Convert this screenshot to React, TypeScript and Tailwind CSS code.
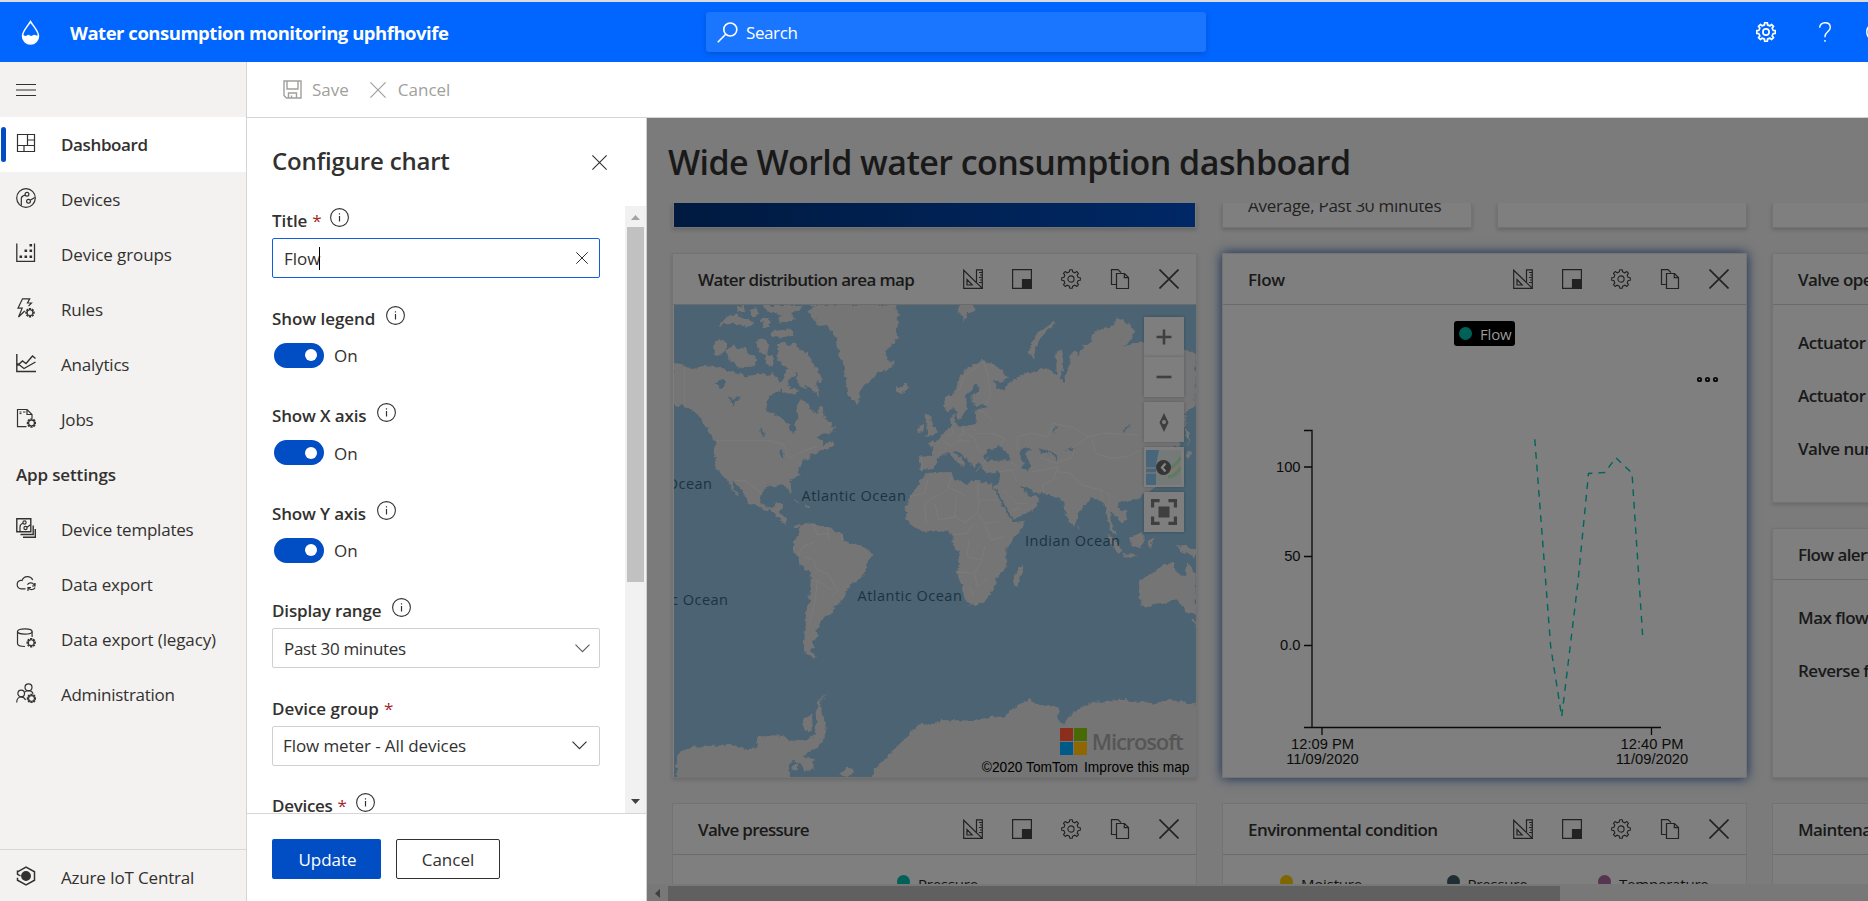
import type { ReactNode } from "react";

type SvgProps = { className?: string; children?: ReactNode; size?: number; sw?: number; box?: number };

function Svg({ className = "", children, size = 20, sw = 1.2, box = 20 }: SvgProps) {
  return (
    <svg className={`shrink-0 ${className}`} width={size} height={size} viewBox={`0 0 ${box} ${box}`} fill="none" stroke="currentColor" strokeWidth={sw}>
      {children}
    </svg>
  );
}

function gearPath(cx: number, cy: number, outer: number, inner: number, teeth = 8) {
  const pts: string[] = [];
  const step = (Math.PI * 2) / teeth;
  for (let i = 0; i < teeth; i++) {
    const a = i * step - Math.PI / 2;
    const at = (r: number, o: number) => `${(cx + r * Math.cos(a + o * step)).toFixed(2)},${(cy + r * Math.sin(a + o * step)).toFixed(2)}`;
    pts.push(at(inner, -0.27), at(outer, -0.18), at(outer, 0.18), at(inner, 0.27));
  }
  return `M${pts.join("L")}Z`;
}

const SmallGear = ({ x, y }: { x: number; y: number }) => (
  <path d={gearPath(x, y, 4.2, 2.8)} strokeWidth={1.1} />
);

const GearIcon = ({ className = "", sw = 1.2 }: { className?: string; sw?: number }) => (
  <Svg className={className} sw={sw}>
    <path d={gearPath(10, 10, 9.4, 7.3)} strokeLinejoin="round" />
    <circle cx="10" cy="10" r="3.1" />
  </Svg>
);

const Cross = ({ size, sw = 1.2, className = "" }: { size: number; sw?: number; className?: string }) => (
  <Svg size={size} sw={(sw * 20) / size} className={className}>
    <path d="M.5.5l19 19M19.5.5l-19 19" />
  </Svg>
);

const Chevron = ({ className = "" }: { className?: string }) => (
  <svg className={className} width="15" height="9" viewBox="0 0 15 9" fill="none" stroke="currentColor" strokeWidth="1.15">
    <path d="M.5.7l7 7 7-7" />
  </svg>
);

const icons: Record<string, ReactNode> = {
  dashboard: <Svg><path d="M1.5 1.5h17v17h-17zM11.5 1.5v11M1.5 12.5h17M11.5 7h7M8 12.5v6" /></Svg>,
  devices: (
    <Svg>
      <circle cx="10" cy="10" r="9.3" />
      <circle cx="11" cy="6.3" r="1.9" />
      <circle cx="12.5" cy="13.2" r="1.9" />
      <path d="M9.2 7.2C6 8 5 9.5 5.3 11.5v6M14.2 12.3l4.6-2.8" />
    </Svg>
  ),
  groups: (
    <Svg sw={1.3}>
      <path d="M.8.5v17.8h17.7V.5" />
      <g fill="currentColor" stroke="none">
        <path d="M13.5 1h2.6v2.6h-2.6zM13.5 6.5h2.6v2.6h-2.6zM13.5 12.5h2.6v2.6h-2.6zM8.5 6.5h2.6v2.6H8.5zM8.5 12.5h2.6v2.6H8.5zM3.5 12.5h2.6v2.6H3.5z" />
      </g>
    </Svg>
  ),
  rules: (
    <Svg sw={1.2}>
      <path d="M12.5 8.2L15.5 5h-4l2.2-4.2H6.5L2 10.2h4.2L2.5 19l6.2-6" />
      <SmallGear x={14} y={14.7} />
    </Svg>
  ),
  analytics: <Svg sw={1.4}><path d="M.8 1v17.5H20M1.5 12.5L6.5 8l3.5 2.5 6.5-7.5L19.5 5.5M1.5 10.5l6.5 5 11.5-6.5" /></Svg>,
  jobs: (
    <Svg>
      <path d="M10.5 18.7h-9V1.5h9.5l5 5v3.5M11 1.5v5h5" />
      <path d="M3.5 4h2M7 4h2.5M3.5 5.6h2" strokeWidth={1} />
      <SmallGear x={15.5} y={15} />
    </Svg>
  ),
  templates: (
    <Svg>
      <path d="M.8.8h14v13H.8zM17.2 7.5v9H4.5M19.3 11v8.2H7" strokeWidth={1.4} />
      <circle cx="8.5" cy="4.5" r="1.6" />
      <circle cx="9.5" cy="10" r="1.6" />
      <path d="M6.8 5.2C4.5 6 4 7.5 4 9v4.5M11 9.3l3.5-2.5" />
    </Svg>
  ),
  cloud: (
    <Svg>
      <path d="M9.5 15.8H5.2a4.3 4.3 0 0 1-.6-8.5c1 0 1.4.2 1.4.2A5.8 5.8 0 0 1 16.7 7M11.5 11.8c.8-2 4.5-3 6.5-.2l1-1.3M19 10v3h-3M19 14.5c-1 2.3-4.5 3-6.5.3M12 18v-3.5h3" />
    </Svg>
  ),
  database: (
    <Svg>
      <ellipse cx="8.8" cy="3.5" rx="7.3" ry="2.6" />
      <path d="M1.5 3.5v12c0 1.8 3 3 7.5 3M16.1 3.5V9" />
      <SmallGear x={15.2} y={14.7} />
    </Svg>
  ),
  admin: (
    <Svg>
      <circle cx="12.5" cy="4.3" r="3.5" />
      <circle cx="5.2" cy="10.5" r="3.3" />
      <path d="M.7 19.5c0-3.5 2-5.7 4.5-5.7s3.6 1.5 4.4 3.2M8.7 9.2c1-1 2-1.5 3.8-1.5 2.3 0 4 1.3 4.6 3.2" />
      <SmallGear x={15.5} y={15.5} />
    </Svg>
  ),
  central: (
    <Svg sw={1.5}>
      <path d="M1.5 4.5v3.8l3 1.5M1.5 5.8L10 1.2l8.5 4.6v8.4L10 18.8l-8.5-4.6v-2.5" />
      <circle cx="10" cy="10" r="4.2" fill="currentColor" />
    </Svg>
  ),
};

function NavItem({ icon, label, active = false, track = "tracking-[-0.2px]" }: { icon: string; label: string; active?: boolean; track?: string }) {
  return (
    <div className={`relative flex h-[55px] items-center pl-4 ${active ? "bg-white" : ""}`}>
      {active && <span className="absolute left-px top-[10px] h-[35px] w-[5px] rounded-sm bg-[#004dc4]" />}
      <span className="mb-1 flex w-5 text-[#323130]">{icons[icon]}</span>
      <span className={`ml-[25px] whitespace-nowrap pt-px ${track} ${active ? "font-[550]" : ""}`}>{label}</span>
    </div>
  );
}

const Info = ({ className = "ml-[11px]" }: { className?: string }) => (
  <Svg size={19} box={19} sw={1.1} className={`mb-[11px] ${className}`}>
    <circle cx="9.5" cy="9.5" r="8.9" />
    <path d="M9.5 8v5.5M9.5 5.2v1.3" strokeWidth={1.2} />
  </Svg>
);

type FieldProps = { label: string; required?: boolean; info?: boolean; track?: string; infoGap?: string; children?: ReactNode };

function Field({ label, required = false, info = true, track = "tracking-[-0.05px]", infoGap, children }: FieldProps) {
  return (
    <div className="h-[97.5px]">
      <div className="flex h-8 items-end">
        <span className={`whitespace-nowrap pb-[6px] font-[570] leading-[23px] ${track}`}>{label}</span>
        {required && <span className="pb-[6px] pl-[5px] leading-[23px] text-[#a4262c]">*</span>}
        {info && <Info className={infoGap} />}
      </div>
      {children}
    </div>
  );
}

const Toggle = () => (
  <div className="flex items-center pl-[2px] pt-[7px]">
    <span className="flex h-[25px] w-[50px] items-center justify-end rounded-full bg-[#004dc4] pr-[7px]">
      <span className="size-3 rounded-full bg-white" />
    </span>
    <span className="pl-[10px] pt-px leading-[23px]">On</span>
  </div>
);

const CardIcons = () => (
  <div className="flex gap-[28.8px] text-[#222]">
    <Svg sw={1.2}>
      <path d="M.7 1.2v18.1h18.6zM4 10.5v5.5h5.2zM13.5 13V.9h5.8v18.4M16 3.5h3.3M17 6h2.3M16 8.5h3.3M17 11h2.3M16 13.5h3.3" />
    </Svg>
    <Svg><path d="M.6.6h18.8v18.8H.6z" /><path d="M10.5 10.5h9v9h-9z" fill="currentColor" /></Svg>
    <GearIcon sw={1.1} />
    <Svg><path d="M6.5 15.5H1.5V.6H8l3 3M6.5 4.5h8l4 4v11h-12zM14.3 4.5v4.2h4.2" /></Svg>
    <Cross size={20} sw={1.6} />
  </div>
);

function Card({ title, icons: showIcons = true, className = "", track = "tracking-[-0.6px]", children }: { title: string; icons?: boolean; className?: string; track?: string; children?: ReactNode }) {
  return (
    <section className={`flex w-[525px] shrink-0 flex-col overflow-hidden border border-[#737373] bg-[#7f7f7f] ${className}`}>
      <header className="flex h-[51px] shrink-0 items-center justify-between border-b border-[#6b6b6b] pl-[25px] pr-[17.5px]">
        <h2 className={`whitespace-nowrap pt-px font-[550] text-[#191919] ${track}`}>{title}</h2>
        {showIcons && <CardIcons />}
      </header>
      {children}
    </section>
  );
}

const LAND = [
  "39,222 55,224 75,228 95,240 110,232 125,224 140,230 152,226 160,235 180,232 195,245 215,248 230,252 240,265 250,250 265,255 285,252 300,258 318,248 330,262 335,278 345,270 355,240 372,232 380,258 368,262 352,285 345,298 325,305 308,318 300,335 298,360 310,370 325,375 340,385 352,395 360,400 362,420 375,433 380,410 378,398 388,385 384,362 383,345 392,328 402,332 415,340 425,362 438,370 448,352 456,358 458,378 470,392 490,412 488,425 470,430 450,432 437,440 445,450 455,455 460,465 480,455 490,462 470,475 450,483 435,490 420,492 415,508 402,515 392,530 390,550 375,568 363,575 368,595 368,615 362,605 355,588 340,583 320,590 300,590 288,600 283,625 288,645 300,655 318,655 325,640 345,638 340,655 335,668 352,685 356,705 370,712 385,705 392,708 385,718 372,715 358,705 340,692 320,668 300,660 275,652 250,640 245,625 235,608 215,585 200,570 205,590 222,618 212,612 198,590 188,568 175,558 160,535 153,515 154,480 155,460 148,445 135,420 120,395 105,375 90,360 70,348 39,342",
  "392,708 405,695 420,700 440,702 470,712 488,722 510,730 518,752 530,758 555,768 580,775 595,795 585,810 577,825 575,845 562,868 545,875 530,885 525,900 512,925 500,945 487,948 485,960 483,972 465,978 458,988 445,995 448,1012 435,1022 440,1042 428,1055 428,1070 420,1082 440,1105 425,1102 408,1090 403,1060 408,1010 408,970 418,930 422,870 422,850 395,825 385,800 370,778 375,755 385,738",
  "415,45 430,52 410,62 430,85 445,108 465,105 480,125 492,145 495,170 500,195 512,215 515,240 520,270 525,300 532,325 545,338 552,345 560,315 568,290 585,278 600,262 610,248 630,242 645,230 658,215 640,212 630,200 635,180 655,160 665,140 660,120 672,105 662,80 674,75 662,65 665,45",
  "660,288 675,292 690,278 698,290 690,305 675,312 665,302",
  "835,45 875,45 885,60 870,70 860,65 852,95 845,75 835,60",
  "155,150 175,148 190,160 182,185 165,200 150,190",
  "185,180 205,165 220,178 240,170 245,190 262,200 275,212 262,232 235,235 215,228 195,212",
  "328,165 345,155 360,165 380,160 400,185 415,190 425,220 440,235 455,270 440,275 445,318 425,300 405,280 392,275 380,250 370,240 350,230 330,210",
  "290,45 385,45 402,50 370,70 375,90 350,98 330,92 338,75 310,70 295,60",
  "313,122 370,120 370,138 330,143 313,135",
  "165,105 185,80 215,72 235,88 260,95 245,112 225,105 200,98",
  "215,52 235,48 238,62 220,68", "250,60 272,55 275,75 258,80", "285,85 305,80 308,110 290,115",
  "268,155 290,145 305,165 300,195 282,190", "300,195 320,200 312,232 296,220",
  "338,292 355,285 372,300 388,298 380,312 350,310", "380,262 400,265 412,300 395,290",
  "725,500 745,496 765,498 764,475 750,460 765,455 780,450 790,435 800,422 815,410 812,380 825,378 828,405 845,408 870,405 885,395 888,375 880,362 900,355 918,350 910,345 885,348 875,340 875,315 895,295 885,280 872,300 855,315 855,335 860,352 850,370 842,390 832,388 828,362 820,355 805,368 795,350 798,325 815,315 830,295 838,265 855,240 880,222 905,210 935,225 960,240 975,265 960,278 935,270 945,300 965,298 975,282 1000,262 1030,252 1060,240 1085,232 1100,245 1110,255 1110,220 1110,190 1125,175 1130,200 1128,240 1118,270 1130,275 1140,240 1150,215 1145,195 1165,185 1170,200 1185,170 1205,155 1215,128 1245,115 1270,105 1275,85 1295,90 1320,105 1330,130 1310,160 1300,170 1340,155 1355,155 1500,190 1500,355 1480,358 1470,370 1475,400 1465,420 1460,450 1455,470 1440,470 1425,500 1440,540 1400,580 1370,605 1340,625 1310,635 1285,640 1280,652 1305,665 1310,685 1295,700 1275,675 1260,668 1262,700 1280,735 1270,735 1255,700 1250,665 1240,640 1220,628 1205,625 1195,640 1170,670 1165,700 1157,710 1145,695 1135,665 1132,635 1120,630 1110,618 1085,612 1055,610 1035,608 1030,598 1010,585 1018,600 1040,618 1050,615 1065,632 1050,655 1010,678 988,690 980,670 960,635 945,605 932,585 945,580 950,560 945,545 920,548 905,542 893,520 880,532 868,520 855,505 838,490 825,482 835,500 855,515 845,530 825,510 810,490 795,495 780,505 775,520 765,535 745,542 730,538",
  "750,548 780,548 815,545 820,562 845,575 865,585 870,570 900,575 930,583 940,605 955,640 970,670 985,697 1022,692 1015,715 990,745 970,775 970,790 972,825 960,845 940,865 943,880 930,900 920,925 900,940 868,947 860,935 848,905 845,880 830,845 838,815 835,790 820,760 818,735 805,722 770,722 730,725 705,705 690,685 688,660 700,620 715,595 730,570",
  "1015,820 1017,835 1000,890 990,888 988,865 990,850 1005,840",
  "745,370 755,375 760,400 775,425 770,435 745,440 750,420 745,400 740,385", "725,405 740,398 738,425 722,430",
  "1105,95 1110,105 1085,120 1065,145 1052,175 1045,205 1032,190 1040,160 1060,125",
  "1248,730 1270,745 1295,785 1285,790 1262,760", "1295,788 1340,797 1325,803 1300,797", "1315,745 1350,725 1358,745 1345,775 1318,765",
  "1365,750 1385,748 1375,762 1380,775 1368,772", "1445,770 1470,768 1500,780 1500,800 1470,790",
  "1338,875 1360,862 1385,845 1400,830 1415,822 1440,820 1442,840 1460,860 1470,855 1475,820 1485,830 1500,858 1500,975 1475,970 1460,945 1450,930 1420,935 1400,940 1370,950 1348,950 1340,900",
  "1490,990 1500,995 1500,1012", "1168,706 1176,716 1168,720", "1472,415 1482,425 1480,470 1474,440", "1476,480 1488,495 1476,503", "368,628 395,640 385,640", "405,646 422,648 412,656",
  "45,1470 45,1395 70,1380 90,1370 140,1368 200,1365 240,1378 270,1375 272,1345 300,1335 345,1338 370,1355 400,1350 425,1345 435,1320 440,1290 438,1250 445,1235 478,1197 455,1228 447,1250 462,1290 465,1330 462,1345 440,1370 420,1385 400,1400 430,1408 430,1435 405,1445 395,1420 375,1410 360,1420 365,1470",
  "590,1470 600,1440 650,1385 690,1340 720,1305 780,1295 790,1290 870,1292 930,1280 965,1280 980,1258 1010,1240 1035,1225 1060,1245 1118,1252 1112,1285 1128,1305 1145,1280 1180,1250 1210,1240 1280,1228 1380,1240 1430,1230 1510,1245 1510,1470",
  "370,1425 390,1420 388,1440 372,1442", "500,1455 528,1432 545,1448 530,1462", "400,1290 425,1270 428,1320 410,1325",
];

const LAKES = [
  "905,500 915,480 935,475 955,472 975,490 978,510 940,512 912,512", "1003,480 1030,470 1037,478 1025,495 1040,530 1030,543 1015,535 1015,510",
  "150,280 170,268 188,280 172,294", "190,322 208,328 230,318 215,335 205,347", "278,412 285,418 293,440 287,440", "338,480 348,478 344,505 338,500",
  "1318,398 1312,415 1290,434 1302,415", "1060,475 1080,480 1108,495 1112,515 1095,490 1065,488", "1138,478 1165,473 1150,482", "1008,585 1020,590 1038,598 1050,612 1036,618 1018,604", "1100,420 1118,402 1105,425 1110,438",
];

const BORDERS =
  "M68 228V345M158 451H300L345 462 360 505 410 480 440 468M198 570L240 573 270 600 285 610M815 410L822 430 800 440M845 408L852 430 835 440 850 455M790 450L815 470 830 455 870 452M870 405L890 430 930 430 965 445 950 470M888 360L905 365 935 395M860 430L880 445 890 475 905 490M905 215L918 250 925 320 910 345M838 300L850 260 895 225M1000 480V440L1040 430 1085 440 1100 400 1155 412 1200 440 1160 470 1155 500 1110 520 1060 500M1200 440L1240 430 1340 435M1210 450L1220 490 1260 505 1310 500 1345 480M975 510L1000 530 985 545M950 545L985 540 1000 575M1040 545L1075 540 1115 530 1100 570 1070 585 1075 612M1115 545L1150 550 1180 585 1235 600 1240 630M1235 600L1260 615 1255 660M730 500L735 540M815 560L805 600 740 640M815 595L860 620M890 580V630H950M895 630L888 670 850 700M750 570L740 610 700 620M740 640L745 700M770 640L780 690 830 680M830 620L825 680 860 700M890 670L910 700 950 695M910 700L925 750 965 740M820 735L860 730 880 700M865 750L860 800 900 810 910 770M832 845L880 850 900 815M880 850L890 890 920 865M865 890L880 920M430 700L440 735 470 730 475 750M470 712V740M510 730V750M405 800L430 810 440 840 470 850 485 880 500 900 480 920M422 870L440 875 435 930 420 1000M385 800L400 770 435 755M440 870L480 900M960 600L1000 640 1030 640M985 660L1010 655M885 545L920 500";

function WorldMap() {
  return (
    <svg width="522" height="472" viewBox="0 0 522 472" className="block bg-[#4b6372]">
      <defs>
        <filter id="coast" x="-5%" y="-5%" width="110%" height="110%">
          <feTurbulence type="fractalNoise" baseFrequency="0.18" numOctaves="2" seed="4" />
          <feDisplacementMap in="SourceGraphic" scale="6" xChannelSelector="R" yChannelSelector="G" />
        </filter>
      </defs>
      <g filter="url(#coast)">
        <g transform="matrix(.35714 0 0 .33333 -14 -15)">
          {LAND.map((p) => <polygon key={p} points={p} fill="#757575" />)}
          {LAKES.map((p) => <polygon key={p} points={p} fill="#4b6372" />)}
        </g>
      </g>
      <path d={BORDERS} transform="matrix(.35714 0 0 .33333 -14 -15)" fill="none" stroke="#7d7d7d" strokeWidth="2.2" />
      <g className="fill-[#1b3342] font-['Open_Sans',sans-serif] text-[14.5px] font-[450] tracking-[0.5px]">
        <text x="38.5" y="183.5" textAnchor="end">Pacific Ocean</text>
        <text x="54.5" y="299.5" textAnchor="end">Pacific Ocean</text>
        <text x="127.5" y="195.5">Atlantic Ocean</text>
        <text x="183.5" y="296">Atlantic Ocean</text>
        <text x="351" y="241">Indian Ocean</text>
      </g>
    </svg>
  );
}

const mapButton = "flex h-10 w-10 items-center justify-center bg-[#7e7e7e] text-[#3f3f3f] shadow-[0_0_3px_rgba(0,0,0,0.25)]";

function MapBody() {
  return (
    <div className="relative h-[472px] w-[522px] self-center">
      <WorldMap />
      <div className="absolute left-[470px] top-3 flex flex-col gap-[5px]">
        <div>
          <div className={mapButton}><Svg size={16} box={16} sw={2.6}><path d="M8 .5v15M.5 8h15" /></Svg></div>
          <div className={mapButton}><Svg size={16} box={16} sw={2.6}><path d="M.5 8h15" /></Svg></div>
        </div>
        <div className={mapButton}>
          <svg width="10" height="19" viewBox="0 0 10 19" fill="currentColor" fillRule="evenodd"><path d="M5 0l4.5 9.5L5 19 .5 9.5zM5 7a2 2 0 1 0 0 4.2A2 2 0 0 0 5 7z" /></svg>
        </div>
        <div className={mapButton}>
          <svg width="35" height="35" viewBox="0 0 35 35">
            <path fill="#757a78" d="M0 0h35v35H0z" />
            <path fill="#48667b" d="M0 0h13l-3 15v20H0z" />
            <path fill="none" stroke="#777" strokeWidth="1.5" d="M0 18h12M0 23h10" />
            <path fill="none" stroke="#5c7c62" strokeWidth="3" d="M22 27c6 0 10-4 13-10M24 18c5-2 8-6 11-11" />
            <path fill="none" stroke="#837767" strokeWidth="2" d="M22 23c6-1 10-5 13-10" />
            <circle cx="17.5" cy="17.5" r="7.5" fill="#353535" />
            <path d="M19.5 13.5l-3.5 4 3.5 4" fill="none" stroke="#868686" strokeWidth="2.2" />
          </svg>
        </div>
        <div className={mapButton}>
          <Svg size={26} box={26} sw={3.2}><path d="M1.6 8.5V1.6h7M17.4 1.6h7v6.9M24.4 17.5v6.9h-7M8.6 24.4h-7v-6.9" /><path d="M7.5 7.5h11v11h-11z" fill="currentColor" stroke="none" /></Svg>
        </div>
      </div>
      <div className="absolute bottom-0 right-[6px] flex flex-col items-end">
        <div className="flex items-center gap-[5px] pr-[7px]">
          <div className="grid grid-cols-2 gap-px">
            <i className="size-[13px] bg-[#8b2f1c]" /><i className="size-[13px] bg-[#476a05]" />
            <i className="size-[13px] bg-[#005a88]" /><i className="size-[13px] bg-[#8e6703]" />
          </div>
          <span className="text-[22px] font-semibold leading-[27px] tracking-[-1.15px] text-[#565656]">Microsoft</span>
        </div>
        <div className="flex gap-[6px] pt-[4px] font-['Liberation_Sans',sans-serif] text-[13.75px] leading-[18px] text-black">
          <span>©2020 TomTom</span><span>Improve this map</span>
        </div>
      </div>
    </div>
  );
}

function FlowChart() {
  return (
    <div className="relative h-[472px]">
      <div className="flex justify-center pt-4">
        <span className="flex h-[25px] w-[61px] items-center gap-2 rounded-[3px] bg-black pl-[5px] text-[15px] tracking-[-0.2px] text-[#999]">
          <i className="size-[13px] rounded-full bg-[#006158]" />
          <span className="pt-[2px]">Flow</span>
        </span>
      </div>
      <svg className="absolute left-0 top-0" width="522" height="472" viewBox="1223 305 522 472" fill="none" stroke="#0a0a0a">
        <g strokeWidth="1.8"><circle cx="1699.5" cy="379.5" r="1.7" /><circle cx="1707.5" cy="379.5" r="1.7" /><circle cx="1715.5" cy="379.5" r="1.7" /></g>
        <path strokeWidth="1.3" d="M1304 430.5h8v297M1304 467h8M1304 556.5h8M1304 645.5h8M1304 727.5h357M1322 727.5v7.5M1651.5 727.5v7.5" />
        <polyline points="1534.8,439.3 1550.7,646.7 1561.7,716.7 1578,581.7 1588.5,473.5 1604.9,472.5 1615.8,457.7 1632,473 1642.6,635" stroke="#00655c" strokeWidth="1.4" strokeDasharray="6.8 5.9" />
        <g fill="#0c0c0c" stroke="none" className="font-['Liberation_Sans',sans-serif] text-[14.7px]">
          <text x="1300.5" y="472" textAnchor="end">100</text>
          <text x="1300.5" y="561" textAnchor="end">50</text>
          <text x="1300.5" y="650" textAnchor="end">0.0</text>
          <text x="1322.5" y="749" textAnchor="middle">12:09 PM</text>
          <text x="1322.5" y="764" textAnchor="middle">11/09/2020</text>
          <text x="1652" y="749" textAnchor="middle">12:40 PM</text>
          <text x="1652" y="764" textAnchor="middle">11/09/2020</text>
        </g>
      </svg>
    </div>
  );
}

function Legend({ color, label, className = "" }: { color: string; label: string; className?: string }) {
  return (
    <span className={`flex items-start gap-2 text-[15px] leading-5 tracking-[-0.2px] text-[#111] ${className}`}>
      <i className={`size-[13px] rounded-full ${color}`} />
      <span className="-mt-px">{label}</span>
    </span>
  );
}

const small = "h-[25px] shrink-0 border border-t-0 border-[#737373] shadow-[0_2px_4px_rgba(0,0,0,0.18)]";
const lift = "shadow-[0_2px_4px_rgba(0,0,0,0.15)]";
const row = "pl-[25px] font-[550] leading-[23px] tracking-[-0.5px] text-[#191919]";

function Dashboard() {
  return (
    <main className="flex min-w-0 flex-1 flex-col bg-[#7b7b7b]">
      <h1 className="h-[85px] shrink-0 whitespace-nowrap pl-[21px] pt-[21px] text-[34px] font-[580] leading-[46px] tracking-[-0.56px] text-[#191919]">
        Wide World water consumption dashboard
      </h1>
      <div className="flex h-[681px] flex-col gap-[25px] overflow-hidden pl-[25px]">
        <div className="flex gap-[25px]">
          <div className={`${small} w-[525px] px-px`}>
            <div className="h-full bg-gradient-to-r from-[#001a40] to-[#002866]" />
          </div>
          <div className={`${small} w-[250px] overflow-hidden bg-[#7f7f7f] pl-[25px]`}>
            <div className="-mt-[9px] whitespace-nowrap leading-[24px] tracking-[-0.26px] text-[#222]">Average, Past 30 minutes</div>
          </div>
          <div className={`${small} w-[250px] bg-[#7f7f7f]`} />
          <div className={`${small} w-[250px] bg-[#7f7f7f]`} />
        </div>
        <div className="flex gap-[25px]">
          <Card title="Water distribution area map" track="tracking-[-0.62px]" className={`h-[525px] ${lift}`}><MapBody /></Card>
          <Card title="Flow" track="tracking-[-0.3px]" className="h-[525px] shadow-[0_0_11px_rgba(8,36,82,0.9)]"><FlowChart /></Card>
          <div className="flex shrink-0 flex-col gap-[25px]">
            <Card title="Valve operation" icons={false} className={`h-[250px] ${lift}`}>
              <div className={`${row} flex flex-col gap-[30px] pt-[26px]`}>
                <span>Actuator status</span><span>Actuator position</span><span>Valve number</span>
              </div>
            </Card>
            <Card title="Flow alerts" icons={false} className={`h-[250px] ${lift}`}>
              <div className={`${row} flex flex-col gap-[30px] pt-[26px]`}>
                <span>Max flow alert</span><span>Reverse flow alert</span>
              </div>
            </Card>
          </div>
        </div>
        <div className="flex gap-[25px]">
          <Card title="Valve pressure" track="tracking-[-0.7px]" className="h-[250px]">
            <div className="flex justify-center pl-[6px] pt-[20px]"><Legend color="bg-[#006158]" label="Pressure" /></div>
          </Card>
          <Card title="Environmental condition" track="tracking-[-0.58px]" className="h-[250px]">
            <div className="flex pl-[57px] pt-[20px]">
              <Legend color="bg-[#7f6700]" label="Moisture" className="w-[166.5px]" />
              <Legend color="bg-[#202e33]" label="Pressure" className="w-[151.5px]" />
              <Legend color="bg-[#563552]" label="Temperature" />
            </div>
          </Card>
          <Card title="Maintenance" icons={false} className="h-[250px]" />
        </div>
      </div>
      <div className="flex h-[17px] items-center bg-[#787878] pt-[2px]">
        <svg className="ml-2 mr-2" width="5" height="9" viewBox="0 0 5 9" fill="#404040"><path d="M5 0v9L0 4.5z" /></svg>
        <div className="h-[15px] w-[892px] bg-[#606060]" />
      </div>
    </main>
  );
}

function ConfigPanel() {
  const box = "flex h-10 w-[328px] items-center justify-between rounded-[2px] border";
  return (
    <aside className="flex w-[400px] shrink-0 flex-col border-r border-[#d2d0ce] bg-white">
      <div className="flex h-[88px] shrink-0 items-start justify-between pl-[25px] pr-[39px]">
        <h2 className="pt-[27px] text-[24px] font-[570] leading-8 tracking-[-0.18px]">Configure chart</h2>
        <Cross size={15} sw={1.1} className="mt-[36.5px]" />
      </div>
      <div className="flex h-[608px] shrink-0 border-b border-[#d8d6d4]">
        <div className="flex-1 overflow-hidden pl-[25px]">
          <Field label="Title" required infoGap="ml-[8px]">
            <div className={`${box} border-[#0f5fe0] pl-[11px] pr-[11px]`}>
              <span className="flex items-center pt-[2px]">Flow<i className="-ml-px mb-[2px] h-[23px] w-px bg-black" /></span>
              <Cross size={12} sw={1} />
            </div>
          </Field>
          <Field label="Show legend"><Toggle /></Field>
          <Field label="Show X axis" track="tracking-[-0.15px]"><Toggle /></Field>
          <Field label="Show Y axis" track="tracking-[-0.15px]"><Toggle /></Field>
          <Field label="Display range" track="tracking-[-0.15px]">
            <div className={`${box} border-[#d2d0ce] pl-[11px] pr-[9px]`}>
              <span className="pt-[2px] tracking-[-0.33px]">Past 30 minutes</span><Chevron className="text-[#605e5c]" />
            </div>
          </Field>
          <Field label="Device group" required info={false} track="tracking-[-0.03px]">
            <div className={`${box} border-[#d2d0ce] pl-[10px] pr-[12px]`}>
              <span className="pt-px tracking-[-0.09px]">Flow meter - All devices</span><Chevron />
            </div>
          </Field>
          <Field label="Devices" required track="tracking-[-0.3px]" infoGap="ml-[9.5px]" />
        </div>
        <div className="flex w-[21px] flex-col items-center bg-[#f1f1f1]">
          <svg className="mb-[7px] mt-[9px]" width="9" height="5" viewBox="0 0 9 5" fill="#a3a3a3"><path d="M0 5h9L4.5 0z" /></svg>
          <div className="h-[355px] w-[17px] bg-[#c1c1c1]" />
          <svg className="mb-[9px] mt-auto" width="9" height="5" viewBox="0 0 9 5" fill="#404040"><path d="M0 0h9L4.5 5z" /></svg>
        </div>
      </div>
      <div className="flex gap-[15px] pl-[25px] pt-[25px]">
        <button className="h-10 w-[109px] rounded-[2px] bg-[#004dc4] pl-[2px] pt-[2px] text-white">Update</button>
        <button className="h-10 w-[104px] rounded-[2px] border border-[#323130] pt-[2px]">Cancel</button>
      </div>
    </aside>
  );
}

export default function App() {
  return (
    <div className="flex h-[901px] w-[1868px] flex-col overflow-hidden bg-white font-['Open_Sans',sans-serif] text-[17px] font-[370] text-[#323130]">
      <div className="h-[2px] shrink-0 bg-[#dadce0]" />
      <header className="flex h-[60px] shrink-0 items-center overflow-hidden bg-[#0066ff] text-white">
        <svg className="ml-[21px] shrink-0" width="19" height="25" viewBox="0 0 19 25">
          <path d="M9.5 1.5C7 5.8 1.5 11 1.5 16a8 8 0 0 0 16 0c0-5-5.5-10.2-8-14.5z" fill="none" stroke="#fff" strokeWidth="1.5" />
          <path d="M1.5 15c1.500 0 1.800 1 3 1s1.500-1.300 3-1.300 1.500 1.300 2.700 1.300 1.500-1.300 3-1.300 1.500 1 4.300.8A8 8 0 0 1 1.500 16z" fill="#fff" />
        </svg>
        <span className="ml-[30px] w-[636px] shrink-0 whitespace-nowrap pt-[2px] text-[18.5px] font-[680] tracking-[-0.48px]">Water consumption monitoring uphfhovife</span>
        <div className="flex h-10 w-[500px] shrink-0 items-center rounded-[3px] bg-[#1a75ff] pl-[11px] shadow-[0_2px_5px_rgba(0,40,120,0.3)]">
          <Svg size={21} box={21} sw={1.6}><circle cx="13.3" cy="7.5" r="6.5" /><path d="M8.7 12.3L.8 20.2" /></Svg>
          <span className="pl-[8px] pt-[2px] tracking-[-0.4px]">Search</span>
        </div>
        <GearIcon className="ml-[550px]" sw={1.7} />
        <svg className="ml-[43px] shrink-0" width="12" height="20" viewBox="0 0 12 20" fill="none" stroke="#fff" strokeWidth="1.4"><path d="M.7 5.8C.7 2.7 3 .8 6 .8s5.300 1.800 5.300 4.700c0 4-5.300 4.500-5.300 8.700v1M6 18v1.800" /></svg>
        <svg className="ml-[35px] shrink-0" width="20" height="20" viewBox="0 0 20 20" fill="none" stroke="#fff" strokeWidth="1.5"><circle cx="10" cy="10" r="9.2" /></svg>
      </header>
      <div className="flex min-h-0 flex-1">
        <nav className="flex w-[247px] shrink-0 flex-col border-r border-[#d6d4d2] bg-[#f3f2f1]">
          <div className="flex h-[55px] shrink-0 items-center pl-4">
            <svg width="20" height="12" viewBox="0 0 20 12" stroke="#323130" strokeWidth="1.1"><path d="M0 .5h20M0 6h20M0 11.5h20" /></svg>
          </div>
          <NavItem icon="dashboard" label="Dashboard" active track="tracking-[-0.38px]" />
          <NavItem icon="devices" label="Devices" />
          <NavItem icon="groups" label="Device groups" track="tracking-[-0.1px]" />
          <NavItem icon="rules" label="Rules" />
          <NavItem icon="analytics" label="Analytics" />
          <NavItem icon="jobs" label="Jobs" />
          <div className="flex h-[55px] items-center pl-4 pt-px font-semibold tracking-[-0.15px]">App settings</div>
          <NavItem icon="templates" label="Device templates" track="tracking-[-0.22px]" />
          <NavItem icon="cloud" label="Data export" track="tracking-[-0.2px]" />
          <NavItem icon="database" label="Data export (legacy)" track="tracking-[-0.12px]" />
          <NavItem icon="admin" label="Administration" track="tracking-[-0.27px]" />
          <div className="mt-auto h-[52px] shrink-0 overflow-hidden border-t border-[#dad8d6]">
            <NavItem icon="central" label="Azure IoT Central" track="tracking-[-0.18px]" />
          </div>
        </nav>
        <div className="flex min-w-0 flex-1 flex-col">
          <div className="flex h-14 shrink-0 items-center border-b border-[#d6d4d2] pl-[36px] text-[#a19f9d]">
            <Svg size={19} box={19} sw={1.4}><path d="M1 1h17v17H3.5L1 15.5zM4 1v8h11V1M5.5 18v-5h8v5M8.5 18v-2.5" /></Svg>
            <span className="pl-[10px]">Save</span>
            <Cross size={16} sw={1.2} className="ml-[21px]" />
            <span className="pl-[12px]">Cancel</span>
          </div>
          <div className="flex min-h-0 flex-1">
            <ConfigPanel />
            <Dashboard />
          </div>
        </div>
      </div>
    </div>
  );
}
